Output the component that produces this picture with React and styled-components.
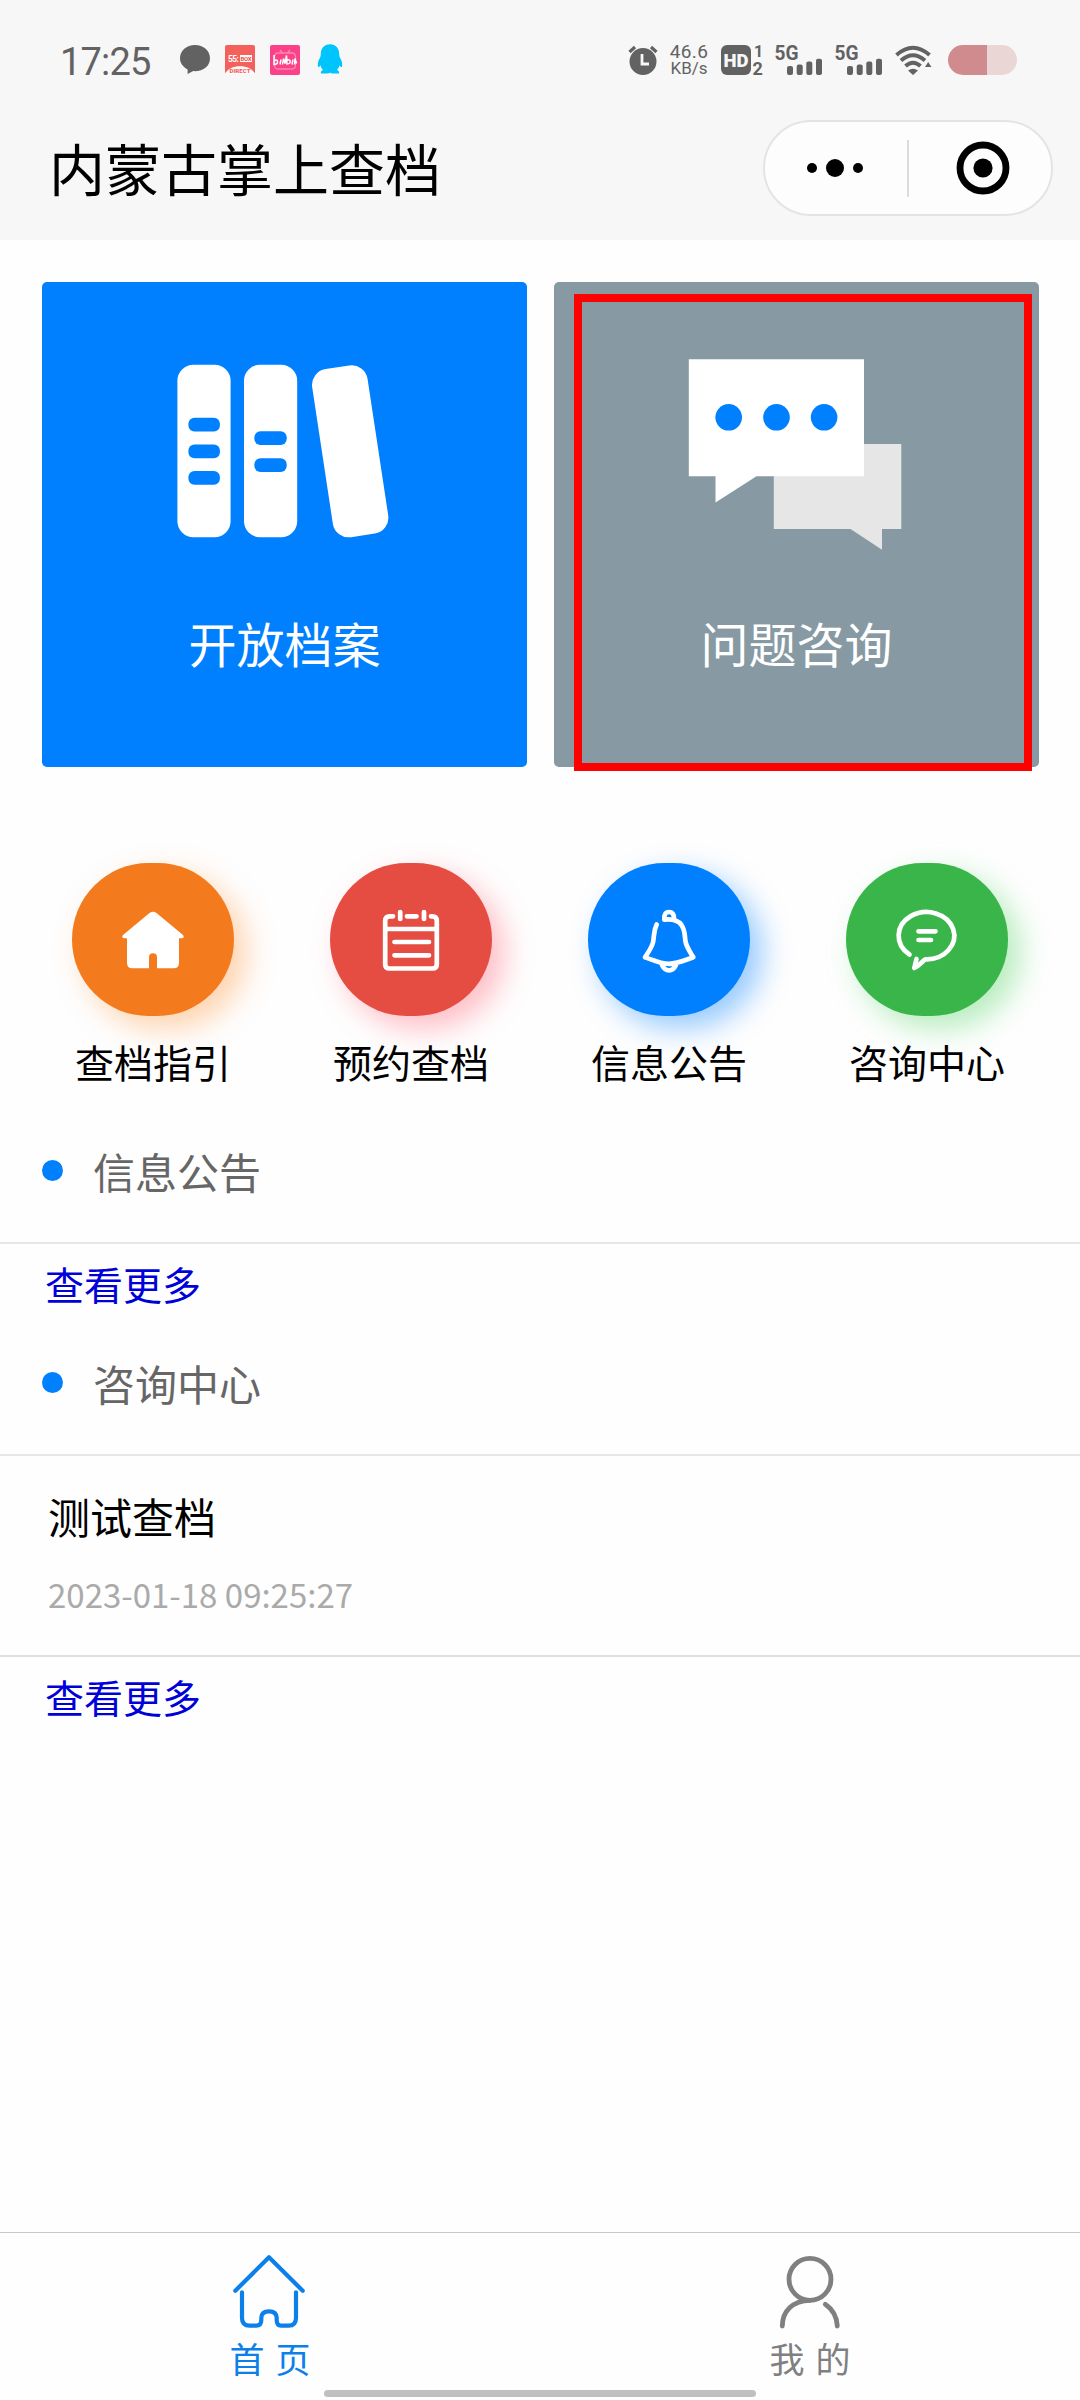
import React from 'react';
import styled, { createGlobalStyle } from 'styled-components';

const GlobalStyle = createGlobalStyle`
  * {
    box-sizing: border-box;
  }
  body {
    margin: 0;
    background: #fefefe;
    font-family: "Noto Sans CJK SC", "Noto Sans", sans-serif;
  }
  svg {
    overflow: visible;
  }
`
const Page = styled.div`
  width: 1080px;
  height: 2400px;
  display: flex;
  flex-direction: column;
  overflow: hidden;
`
const Header = styled.header`
  height: 240px;
  background: #f7f7f7;
`
const StatusBar = styled.div`
  height: 120px;
  padding: 0 63px 0 60px;
  display: flex;
  justify-content: space-between;
  align-items: center;
  color: #626262;
`
const StatusGroup = styled.div`
  display: flex;
  align-items: center;
  gap: ${props => props.$gap || 0}px;
`
const Clock = styled.span`
  width: 105px;
  padding-top: 4px;
  font: 400 38px/42px Roboto, sans-serif;
  letter-spacing: -.8px;
`
const Speed = styled.span`
  width: 40px;
  margin: 0 2px 0 -2px;
  display: flex;
  flex-direction: column;
  align-items: center;
  font: 400 18px/17px Roboto, sans-serif;
`
const SpeedValue = styled.span`
  font-size: 19px;
  letter-spacing: .4px;
`
const SpeedUnit = styled.span`
  font-size: 17px;
`
const Battery = styled.div`
  width: 69px;
  height: 30px;
  border-radius: 15px;
  background: linear-gradient(90deg, #d08b8e 39px, #ebd6d6 39px);
`
const TitleBar = styled.div`
  height: 96px;
  padding: 0 27px 0 49px;
  display: flex;
  justify-content: space-between;
  align-items: center;
`
const Title = styled.h1`
  margin: 0;
  font-size: 56px;
  line-height: 80px;
  padding-bottom: 2px;
  font-weight: 400;
  color: #000;
`
const Capsule = styled.div`
  width: 290px;
  height: 96px;
  border: 2px solid #e4e4e4;
  border-radius: 48px;
  background: #fdfdfd;
  display: flex;
  align-items: center;
`
const CapsuleHalf = styled.div`
  width: 142px;
  padding: ${props => props.$pad || 0};
  display: flex;
  justify-content: center;
  align-items: center;
`
const CapsuleLine = styled.i`
  width: 2px;
  height: 57px;
  background: #dcdcdc;
`
const Cards = styled.section`
  padding: 42px 41px 0 42px;
  display: flex;
  justify-content: space-between;
`
const Card = styled.div`
  position: relative;
  width: 485px;
  height: 485px;
  padding-top: 70px;
  border-radius: 5px;
  background: ${props => props.$color};
  display: flex;
  flex-direction: column;
  align-items: center;
`
const CardLabel = styled.span`
  margin-top: 60px;
  font-size: 48px;
  line-height: 60px;
  color: #fff;
`
const Highlight = styled.div`
  position: absolute;
  top: 12px;
  left: 20px;
  width: 458px;
  height: 477px;
  border: 8px solid #fd0000;
`
const Services = styled.section`
  margin-top: 96px;
  padding: 0 24px;
  display: grid;
  grid-template-columns: repeat(4, 1fr);
`
const Service = styled.div`
  display: flex;
  flex-direction: column;
  align-items: center;
`
const Bubble = styled.div`
  width: 162px;
  height: 153px;
  border-radius: 77px;
  background: ${props => props.$color};
  box-shadow: 12px 12px 30px ${props => props.$shadow};
  display: flex;
  justify-content: center;
  align-items: center;
`
const ServiceLabel = styled.span`
  margin-top: 20px;
  font-size: 39px;
  line-height: 50px;
  color: #000;
`
const SectionHead = styled.div`
  height: 146px;
  padding-left: 42px;
  border-bottom: 2px solid #e6e6e6;
  display: flex;
  align-items: center;
  gap: 30px;
  font-size: 42px;
  color: #666;
  &:before {
    content: "";
    width: 21px;
    height: 21px;
    border-radius: 50%;
    background: #0080ff;
  }
`
const News = styled.section`
  margin-top: 12px;
`
const More = styled.a`
  display: block;
  padding: 13px 0 0 45px;
  font-size: 39px;
  line-height: 53px;
  color: #0000d8;
`
const Item = styled.div`
  height: 201px;
  padding: 30px 0 0 48px;
  border-bottom: 2px solid #e0e0e0;
`
const ItemTitle = styled.div`
  font-size: 42px;
  line-height: 60px;
  color: #000;
`
const ItemDate = styled.div`
  margin-top: 24px;
  font-size: 33px;
  line-height: 48px;
  color: #aaa;
`
const Footer = styled.footer`
  height: 168px;
  margin-top: auto;
  border-top: 1px solid #c8c8c8;
`
const Tabs = styled.nav`
  height: 157px;
  padding-top: 22px;
  display: flex;
`
const Tab = styled.div`
  flex: 1;
  display: flex;
  flex-direction: column;
  align-items: center;
  color: ${props => props.$active ? '#0c80ea' : '#808080'};
`
const TabLabel = styled.span`
  margin-top: 7px;
  font-size: 35px;
  line-height: 44px;
  word-spacing: 3px;
`
const HomeIndicator = styled.div`
  width: 432px;
  height: 7px;
  margin: 0 auto;
  border-radius: 4px;
  background: #c0c0c0;
`
const LineIcon = styled.svg`
  fill: none;
  stroke: ${props => props.$stroke || 'currentColor'};
  stroke-width: ${props => props.$weight || 4.7};
  stroke-linecap: round;
  stroke-linejoin: round;
`

const NoticeIcons = () => (
  <StatusGroup $gap={15}>
    <svg width="30" height="30" viewBox="0 0 30 30">
      <path d="M15 0C6.500 0 0 5.700 0 13.200c0 4.700 3 8.800 7.600 11.200V29l5.600-2.900c10 .6 16.800-5 16.800-12.900C30 5.700 23.500 0 15 0z" fill="#626262" />
    </svg>
    <svg width="30" height="30" viewBox="0 0 30 30">
      <rect width="30" height="29" rx="2" fill="#f4605b" />
      <path d="M0 29C4 18.500 26 18.500 30 29z" fill="#fff" />
      <rect x="15" y="10" width="12" height="7" fill="#fff" />
      <text x="3" y="17" fontSize="8.500" fontWeight="700" fill="#fff" fontFamily="Roboto" textLength="11">55:</text>
      <text x="15.500" y="16" fontSize="6" fontWeight="900" fill="#f4605b" fontFamily="Roboto" textLength="11">BOX</text>
      <text x="4.500" y="28" fontSize="6" fontWeight="900" fill="#f4605b" fontFamily="Roboto" textLength="21">DIRECT</text>
    </svg>
    <svg width="30" height="30" viewBox="0 0 30 30">
      <rect width="30" height="30" rx="2" fill="#fb4187" />
      <path d="M10 5l2.500 3M20 5l-2.500 3M8 8h14q3.500 0 3.500 4v8q0 4-3.500 4H8q-3.500 0-3.500-4v-8q0-4 3.500-4z" stroke="#fd86b2" strokeWidth="1.300" fill="none" />
      <path d="M4 10v9.500q4 0 3.500-3.500-1-2-3 0M10 19.500l1-5M12.500 19.500l1-6 1.500 5 1.500-8 .5 8.500q4 0 3-3.500-1.500-1.500-3 0M22 19.500l1-5M24.500 19.500l.5-6 1.500 5" stroke="#fff" strokeWidth="1.500" fill="none" />
    </svg>
    <svg width="30" height="30" viewBox="0 0 30 30">
      <path d="M15-.8C9-.8 6 3.600 5.800 8.500c0 2-.1 3.200-1.200 5C3.200 16 2.400 18 3 21.500c.2 1.200 1.300.6 2.500-1.300.5 2 1.300 3.500 2.600 4.800C6.400 25.600 5.500 26.400 6 28.500h7l2-.8 2 .8h7c.5-2.100-.4-2.900-2.100-3.500 1.300-1.300 2.100-2.800 2.600-4.800 1.200 1.900 2.300 2.500 2.500 1.300.6-3.500-.2-5.500-1.600-8-1.100-1.800-1.200-3-1.200-5C24 3.600 21-.8 15-.8z" fill="#00c4fc" />
    </svg>
  </StatusGroup>
)

const Signal = () => (
  <svg width="60" height="30" viewBox="0 0 60 30" fill="#626262">
    <text x="-.5" y="14.500" fontSize="20" fontWeight="700" fontFamily="Roboto" textLength="24" lengthAdjust="spacingAndGlyphs">5G</text>
    <rect x="12" y="21" width="6" height="9" rx="2" />
    <rect x="21.700" y="19.500" width="6" height="10.500" rx="2" />
    <rect x="31.300" y="16.500" width="6" height="13.500" rx="2" />
    <rect x="41" y="13.700" width="6" height="16.300" rx="2" />
  </svg>
)

const SystemIcons = () => (
  <StatusGroup>
    <svg width="43" height="30" viewBox="0 0 43 30">
      <circle cx="15" cy="16.500" r="13.500" fill="#626262" />
      <path d="M1.500 7L7 2M28.500 7L23 2" stroke="#626262" strokeWidth="3.200" fill="none" />
      <path d="M14 9v10h7" stroke="#f7f7f7" strokeWidth="2.800" fill="none" />
    </svg>
    <Speed>
      <SpeedValue>46.6</SpeedValue>
      <SpeedUnit>KB/s</SpeedUnit>
    </Speed>
    <svg width="64" height="30" viewBox="0 0 64 30" fill="#626262">
      <rect x="10" width="30" height="30" rx="6" />
      <text x="12.500" y="21.500" fontSize="18" fontWeight="900" fill="#f7f7f7" fontFamily="Roboto" textLength="25" lengthAdjust="spacingAndGlyphs">HD</text>
      <text x="43" y="12" fontSize="16" fontWeight="700" fontFamily="Roboto">1</text>
      <text x="41.500" y="30" fontSize="18" fontWeight="700" fontFamily="Roboto">2</text>
    </svg>
    <Signal />
    <Signal />
    <svg width="53" height="30" viewBox="0 0 53 30" fill="none" stroke="#626262">
      <path d="M1.500 10Q18-4.500 34.500 10" strokeWidth="4" />
      <path d="M6 15.500Q18 5 30 15.500" strokeWidth="4" />
      <path d="M10.500 21Q18 14.500 25.500 21" strokeWidth="4" />
      <path d="M13 25.500q5-3.500 10 0l-5 4.500zM30 22l3.200-5 3.200 5z" fill="#626262" stroke="none" />
    </svg>
    <Battery />
  </StatusGroup>
)

const BooksIcon = () => (
  <svg width="240" height="200" viewBox=".8 0 240 200" fill="#fff">
    <rect x="13.200" y="12.700" width="53.200" height="172.600" rx="16" />
    <rect x="79.800" y="12.700" width="53.200" height="172.600" rx="16" />
    <rect x="158" y="14.300" width="56" height="170" rx="16" transform="rotate(-8.600 186 99.300)" />
    <g fill="#0080ff">
      <rect x="24.200" y="65.700" width="31.500" height="13.800" rx="6" />
      <rect x="24.200" y="92.500" width="31.500" height="13.800" rx="6" />
      <rect x="24.200" y="119" width="31.500" height="13.800" rx="6" />
      <rect x="90.200" y="79.200" width="32.300" height="13.800" rx="6" />
      <rect x="90.200" y="106.200" width="32.300" height="13.800" rx="6" />
    </g>
  </svg>
)

const TalkIcon = () => (
  <svg width="240" height="200" viewBox=".5 0 240 200">
    <path d="M97.300 92H224.800v85h-19.300v20.700L174 177H97.300z" fill="#e6e6e6" />
    <path d="M12.300 7.300H187.500v117H80L39 150.500V124.300H12.300z" fill="#fff" />
    <g fill="#0080ff">
      <circle cx="52.200" cy="65.300" r="13.300" />
      <circle cx="100" cy="65.300" r="13.300" />
      <circle cx="147.600" cy="65.300" r="13.300" />
    </g>
  </svg>
)

const GuideIcon = () => (
  <svg width="66" height="66" viewBox="0 0 66 66">
    <path d="M29.500 6q3.500-2.600 7 0L63 28q2 2.700-1 3.200h-3V56q0 5.300-5.300 5.300H37V50.500q0-4.200-4-4.200t-4 4.200v10.800H12.300Q7 61.300 7 56V31.200H4q-3-.5-1-3.200z" fill="#fff" />
  </svg>
)

const BookingIcon = () => (
  <LineIcon width="66" height="66" viewBox="0 0 66 66" $stroke="#fff">
    <path d="M15 9.300h-3.500q-4.300 0-4.300 4.300v43.600q0 4.300 4.300 4.300h43q4.300 0 4.300-4.300V13.600q0-4.300-4.300-4.300H53M29 9.300h9.500M22.200 5v7M46 5v7M8 22h50M16.500 35h34.500M16.500 48.300h34.500" />
  </LineIcon>
)

const BellIcon = () => (
  <LineIcon width="66" height="66" viewBox="0 0 66 66" $stroke="#fff">
    <path d="M20.700 17.500C17 25 18.500 29 17 35.500 15.500 41 12.500 45 9 50.300 17 53 24 56.800 33 56.800S49 53 57.300 50.300C53.500 44 50.500 40 49.500 34.500 48.500 29 49.500 24 45.500 18 41.500 12.500 36 11.800 28.300 12.700 28 7.500 29.500 5 33 5s5 2.500 5 6.500M26 58q2.500 5.300 7 5.300t7-5.300" />
  </LineIcon>
)

const AskIcon = () => (
  <LineIcon width="66" height="66" viewBox="0 0 66 66" $stroke="#fff">
    <path d="M15.500 47.500A27.800 23.700 0 1 1 31.500 52.400C28 54 26.500 58 20.300 61l2.200-9M24.500 24.300h17M24.500 33h12.500" />
  </LineIcon>
)

const services = [
  { label: '查档指引', color: '#f37b1d', shadow: 'rgba(255, 150, 60, .42)', icon: <GuideIcon /> },
  { label: '预约查档', color: '#e54d42', shadow: 'rgba(255, 90, 110, .4)', icon: <BookingIcon /> },
  { label: '信息公告', color: '#0080ff', shadow: 'rgba(0, 128, 255, .42)', icon: <BellIcon /> },
  { label: '咨询中心', color: '#39b54a', shadow: 'rgba(70, 210, 90, .4)', icon: <AskIcon /> },
]

export default () => {
  return (
    <Page>
      <GlobalStyle />
      <Header>
        <StatusBar>
          <StatusGroup $gap={15}>
            <Clock>17:25</Clock>
            <NoticeIcons />
          </StatusGroup>
          <SystemIcons />
        </StatusBar>
        <TitleBar>
          <Title>内蒙古掌上查档</Title>
          <Capsule>
            <CapsuleHalf $pad="0 2px 0 0">
              <svg width="56" height="20" viewBox="0 0 56 20">
                <circle cx="5" cy="10" r="5" />
                <circle cx="28" cy="10" r="9" />
                <circle cx="51" cy="10" r="5" />
              </svg>
            </CapsuleHalf>
            <CapsuleLine />
            <CapsuleHalf $pad="0 0 0 5px">
              <svg width="54" height="54" viewBox="0 0 54 54">
                <circle cx="27" cy="27" r="23" fill="none" stroke="#000" strokeWidth="6.800" />
                <circle cx="27" cy="27" r="9.600" />
              </svg>
            </CapsuleHalf>
          </Capsule>
        </TitleBar>
      </Header>
      <Cards>
        <Card $color="#0080ff">
          <BooksIcon />
          <CardLabel>开放档案</CardLabel>
        </Card>
        <Card $color="#8799a3">
          <TalkIcon />
          <CardLabel>问题咨询</CardLabel>
          <Highlight />
        </Card>
      </Cards>
      <Services>
        {services.map(s => (
          <Service key={s.label}>
            <Bubble $color={s.color} $shadow={s.shadow}>{s.icon}</Bubble>
            <ServiceLabel>{s.label}</ServiceLabel>
          </Service>
        ))}
      </Services>
      <News>
        <SectionHead>信息公告</SectionHead>
        <More>查看更多</More>
        <SectionHead>咨询中心</SectionHead>
        <Item>
          <ItemTitle>测试查档</ItemTitle>
          <ItemDate>2023-01-18 09:25:27</ItemDate>
        </Item>
        <More>查看更多</More>
      </News>
      <Footer>
        <Tabs>
          <Tab $active>
            <LineIcon width="74" height="74" viewBox="1 0 74 74" $weight={4.2}>
              <path d="M3.300 35.700L37 2.300l33.700 33.400M10 37.300V63q0 7.700 7.700 7.700h6.500q5.100 0 5.100-5.700v-2q0-6.700 7.700-6.700t7.700 6.700v2q0 5.700 4.300 5.700h7.500Q64 70.700 64 63V37.300" />
            </LineIcon>
            <TabLabel>首 页</TabLabel>
          </Tab>
          <Tab>
            <LineIcon width="74" height="74" viewBox="0 0 74 74" $weight={4.8}>
              <circle cx="37" cy="24.300" r="21" />
              <path d="M9.300 71C9.500 56 20 45.500 37 45.300M52.300 49.300Q63.500 57 64.300 71" />
            </LineIcon>
            <TabLabel>我 的</TabLabel>
          </Tab>
        </Tabs>
        <HomeIndicator />
      </Footer>
    </Page>
  )
}
